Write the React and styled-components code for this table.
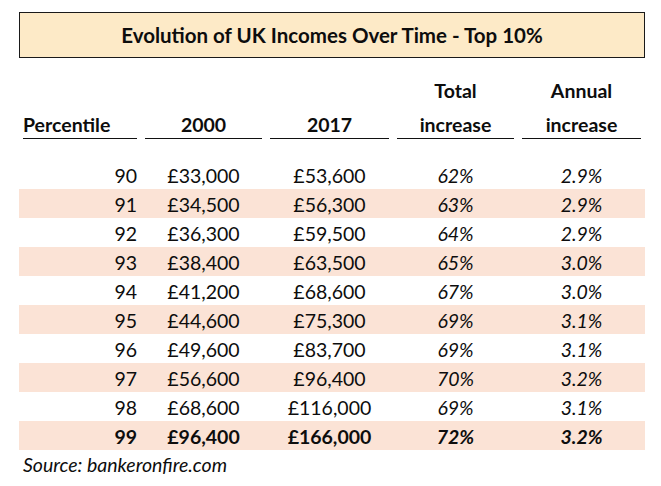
import React from "react";
import styled, { createGlobalStyle } from "styled-components";

const GlobalStyle = createGlobalStyle`
  html, body {
    margin: 0;
    padding: 0;
    background: #ffffff;
  }
  body {
    font-family: Lato, "Open Sans", sans-serif;
    color: #0d0d0d;
  }
`;

const Sheet = styled.div`
  width: 661px;
  height: 486px;
  padding: 12px 16px 0 19px;
  box-sizing: border-box;
`;

const TitleBox = styled.div`
  height: 46px;
  box-sizing: border-box;
  border: 1px solid #1a1a1a;
  background: #fdeac7;
  display: flex;
  align-items: center;
  justify-content: center;
  font-weight: 700;
  font-size: 20.5px;
`;

const Grid = styled.div`
  display: grid;
  grid-template-columns: 122px 125px 127px 125px 127px;
`;

const HeadCell = styled.div`
  margin: 0 4px;
  height: 81px;
  box-sizing: border-box;
  border-bottom: 1.5px solid #111;
  display: flex;
  flex-direction: column;
  justify-content: flex-end;
  gap: 8px;
  align-items: ${(p) => (p.left ? "flex-start" : "center")};
  font-weight: 700;
  font-size: 19.5px;
  line-height: 26px;
`;

const Body = styled.div`
  margin-top: 21px;
`;

const Row = styled(Grid)`
  height: 29px;
  align-items: center;
  background: ${(p) => (p.shaded ? "#fbe3d6" : "transparent")};
  font-weight: ${(p) => (p.bold ? 700 : 400)};
  font-size: 19.5px;
`;

const Cell = styled.div`
  padding: 2px 4px 0;
  text-align: ${(p) => (p.right ? "right" : "center")};
  font-style: ${(p) => (p.italic ? "italic" : "normal")};
`;

const Source = styled.div`
  height: 30px;
  line-height: 30px;
  padding-left: 4px;
  font-style: italic;
  font-size: 19.5px;
`;

const rows = [
  ["90", "£33,000", "£53,600", "62%", "2.9%"],
  ["91", "£34,500", "£56,300", "63%", "2.9%"],
  ["92", "£36,300", "£59,500", "64%", "2.9%"],
  ["93", "£38,400", "£63,500", "65%", "3.0%"],
  ["94", "£41,200", "£68,600", "67%", "3.0%"],
  ["95", "£44,600", "£75,300", "69%", "3.1%"],
  ["96", "£49,600", "£83,700", "69%", "3.1%"],
  ["97", "£56,600", "£96,400", "70%", "3.2%"],
  ["98", "£68,600", "£116,000", "69%", "3.1%"],
  ["99", "£96,400", "£166,000", "72%", "3.2%"],
];

export default function App() {
  return (
    <>
      <GlobalStyle />
      <Sheet>
        <TitleBox>Evolution of UK Incomes Over Time - Top 10%</TitleBox>
        <Grid>
          <HeadCell left>
            <span>Percentile</span>
          </HeadCell>
          <HeadCell>
            <span>2000</span>
          </HeadCell>
          <HeadCell>
            <span>2017</span>
          </HeadCell>
          <HeadCell>
            <span>Total</span>
            <span>increase</span>
          </HeadCell>
          <HeadCell>
            <span>Annual</span>
            <span>increase</span>
          </HeadCell>
        </Grid>
        <Body>
          {rows.map((r, i) => (
            <Row key={r[0]} shaded={i % 2 === 1} bold={i === rows.length - 1}>
              <Cell right>{r[0]}</Cell>
              <Cell>{r[1]}</Cell>
              <Cell>{r[2]}</Cell>
              <Cell italic>{r[3]}</Cell>
              <Cell italic>{r[4]}</Cell>
            </Row>
          ))}
          <Source>Source: bankeronfire.com</Source>
        </Body>
      </Sheet>
    </>
  );
}
